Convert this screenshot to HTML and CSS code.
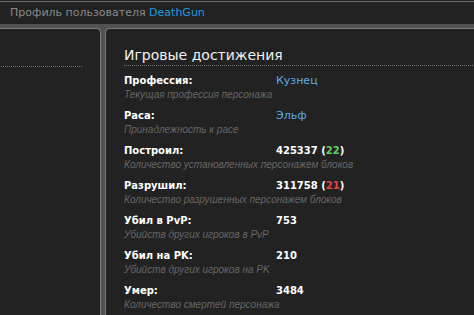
FILE: index.html
```html
<!DOCTYPE html>
<html lang="ru">
<head>
    <meta charset="UTF-8">
    <title>Профиль пользователя DeathGun</title>
    <link rel="stylesheet" href="styles.css">
</head>
<body>
    <div class="top">
        <div class="header">Профиль пользователя <a href="#" class="user">DeathGun</a></div>
    </div>
    <div class="main">
        <div class="side">
            <div class="side-title"></div>
        </div>
        <div class="panel">
            <h2>Игровые достижения</h2>
            <div class="stats">
                <div class="row">
                    <div class="label">Профессия:</div>
                    <div class="value blue">Кузнец</div>
                    <div class="desc">Текущая профессия персонажа</div>
                </div>
                <div class="row">
                    <div class="label">Раса:</div>
                    <div class="value blue">Эльф</div>
                    <div class="desc">Принадлежность к расе</div>
                </div>
                <div class="row">
                    <div class="label">Построил:</div>
                    <div class="value">425337 (<span class="green">22</span>)</div>
                    <div class="desc">Количество установленных персонажем блоков</div>
                </div>
                <div class="row">
                    <div class="label">Разрушил:</div>
                    <div class="value">311758 (<span class="red">21</span>)</div>
                    <div class="desc">Количество разрушенных персонажем блоков</div>
                </div>
                <div class="row">
                    <div class="label">Убил в PvP:</div>
                    <div class="value">753</div>
                    <div class="desc">Убийств других игроков в PvP</div>
                </div>
                <div class="row">
                    <div class="label">Убил на PK:</div>
                    <div class="value">210</div>
                    <div class="desc">Убийств других игроков на PK</div>
                </div>
                <div class="row">
                    <div class="label">Умер:</div>
                    <div class="value">3484</div>
                    <div class="desc">Количество смертей персонажа</div>
                </div>
            </div>
        </div>
    </div>
</body>
</html>
```

FILE: styles.css
```css
body {
    margin: 0;
    background: #525252;
    font-family: 'DejaVu Sans', Verdana, sans-serif;
    overflow: hidden;
    height: 100vh;
    display: flex;
    flex-direction: column;
}

.top {
    background: #222;
    padding-top: 1px;
}

.header {
    border-top: 1px solid #6e6e6e;
    height: 22px;
    padding-left: 10px;
    font-size: 11px;
    line-height: 22px;
    color: #8a8a8a;
}

.header .user {
    color: #1f9ddf;
    text-decoration: none;
}

.main {
    flex: 1;
    display: flex;
    gap: 4px;
    padding-top: 4px;
    margin: 0 -10px;
}

.side,
.panel {
    background: #222;
    border: 1px solid #7a7a7a;
    border-bottom: none;
    border-radius: 5px 5px 0 0;
}

.side {
    width: 111px;
    padding-right: 18px;
    box-sizing: border-box;
}

.side-title {
    height: 37px;
    border-bottom: 1px dotted #7a7a7a;
}

.panel {
    flex: 1;
    padding-left: 18px;
}

.panel h2 {
    margin: 0;
    padding-top: 16px;
    height: 20px;
    font-size: 14px;
    font-weight: normal;
    line-height: 20px;
    color: #f2f2f2;
    border-bottom: 1px dotted #7a7a7a;
}

.stats {
    padding-top: 8px;
}

.row {
    display: grid;
    grid-template-columns: 152px 1fr;
    padding-bottom: 7px;
}

.label,
.value {
    font-size: 10px;
    font-weight: bold;
    line-height: 14px;
    color: #fff;
}

.value.blue {
    font-size: 11px;
    font-weight: normal;
    color: #5aace6;
}

.desc {
    grid-column: 1 / 3;
    font-family: 'Liberation Sans', Arial, sans-serif;
    font-size: 10px;
    font-style: italic;
    line-height: 14px;
    color: #666;
}

.green {
    color: #5fd35f;
}

.red {
    color: #e24545;
}
```
